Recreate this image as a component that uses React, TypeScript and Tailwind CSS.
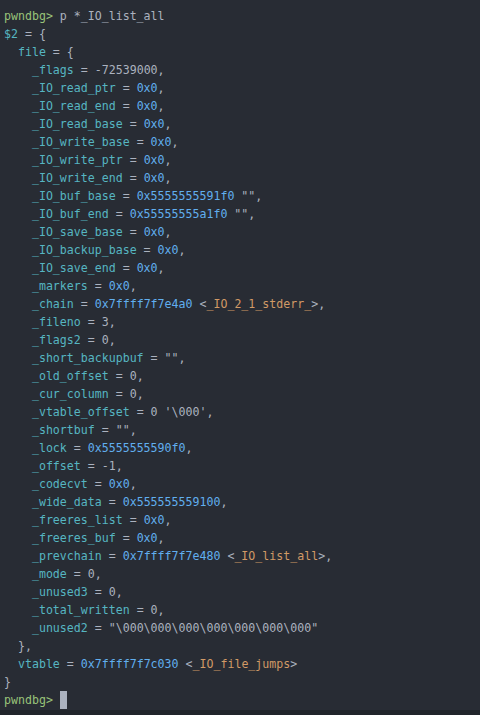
const G = "text-[#98c379]"; // prompt green
const T = "text-[#abb2bf]"; // plain text
const C = "text-[#56b6c2]"; // field names
const B = "text-[#61afef]"; // numbers / pointers
const O = "text-[#d19a66]"; // symbols

type Seg = [string, string];

const field = (indent: number, name: string, value: Seg[], comma = true): Seg[] => [
  [T, " ".repeat(indent)],
  [C, name],
  [T, " = "],
  ...value,
  ...(comma ? ([[T, ","]] as Seg[]) : []),
];

const ptr = (v: string): Seg[] => [[B, v]];
const plain = (v: string): Seg[] => [[T, v]];
const sym = (v: string, s: string): Seg[] => [
  [B, v],
  [T, " <"],
  [O, s],
  [T, ">"],
];

const lines: Seg[][] = [
  [
    [G, "pwndbg> "],
    [T, "p *_IO_list_all"],
  ],
  [
    [C, "$2"],
    [T, " = {"],
  ],
  [
    [T, "  "],
    [C, "file"],
    [T, " = {"],
  ],
  field(4, "_flags", plain("-72539000")),
  field(4, "_IO_read_ptr", ptr("0x0")),
  field(4, "_IO_read_end", ptr("0x0")),
  field(4, "_IO_read_base", ptr("0x0")),
  field(4, "_IO_write_base", ptr("0x0")),
  field(4, "_IO_write_ptr", ptr("0x0")),
  field(4, "_IO_write_end", ptr("0x0")),
  field(4, "_IO_buf_base", [[B, "0x5555555591f0"], [T, ' ""']]),
  field(4, "_IO_buf_end", [[B, "0x55555555a1f0"], [T, ' ""']]),
  field(4, "_IO_save_base", ptr("0x0")),
  field(4, "_IO_backup_base", ptr("0x0")),
  field(4, "_IO_save_end", ptr("0x0")),
  field(4, "_markers", ptr("0x0")),
  field(4, "_chain", sym("0x7ffff7f7e4a0", "_IO_2_1_stderr_")),
  field(4, "_fileno", plain("3")),
  field(4, "_flags2", plain("0")),
  field(4, "_short_backupbuf", plain('""')),
  field(4, "_old_offset", plain("0")),
  field(4, "_cur_column", plain("0")),
  field(4, "_vtable_offset", plain("0 '\\000'")),
  field(4, "_shortbuf", plain('""')),
  field(4, "_lock", ptr("0x5555555590f0")),
  field(4, "_offset", plain("-1")),
  field(4, "_codecvt", ptr("0x0")),
  field(4, "_wide_data", ptr("0x555555559100")),
  field(4, "_freeres_list", ptr("0x0")),
  field(4, "_freeres_buf", ptr("0x0")),
  field(4, "_prevchain", sym("0x7ffff7f7e480", "_IO_list_all")),
  field(4, "_mode", plain("0")),
  field(4, "_unused3", plain("0")),
  field(4, "_total_written", plain("0")),
  field(4, "_unused2", plain('"\\000\\000\\000\\000\\000\\000\\000"'), false),
  [[T, "  },"]],
  field(2, "vtable", sym("0x7ffff7f7c030", "_IO_file_jumps"), false),
  [[T, "}"]],
];

export default function App() {
  return (
    <div className="w-[480px] h-[715px] overflow-hidden bg-[#282c34] flex flex-col font-['DejaVu_Sans_Mono',monospace] text-[11.6px] leading-[18px]">
      <div className="pt-[7px] px-[4px] whitespace-pre">
        {lines.map((segs, i) => (
          <div key={i} className="h-[18px]">
            {segs.map(([cls, txt], j) => (
              <span key={j} className={cls}>
                {txt}
              </span>
            ))}
          </div>
        ))}
        <div className="h-[18px] flex">
          <span className={G}>{"pwndbg> "}</span>
          <span className="w-[7px] h-[18px] bg-[#abb2bf]" />
        </div>
      </div>
      <div className="flex-1 mt-[1px] bg-[#21252b] px-[4px] pt-[7px] whitespace-pre text-[#7f848e]">
        {"           [ Legend: Modified register | Code | Heap ]"}
      </div>
    </div>
  );
}
